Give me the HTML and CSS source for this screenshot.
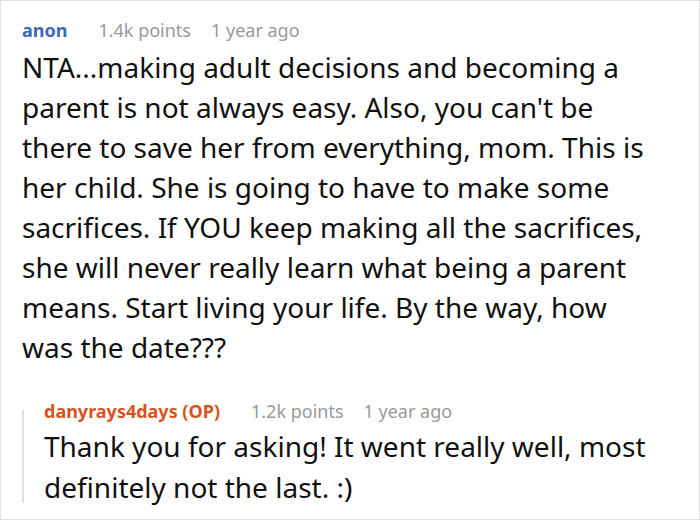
FILE: index.html
```html
<!DOCTYPE html>
<html>
<head>
<meta charset="utf-8">
<link rel="stylesheet" href="styles.css">
</head>
<body>
<div class="frame">
  <div class="comment">
    <div class="meta">
      <span class="user">anon</span>
      <span class="info">1.4k points</span>
      <span class="info">1 year ago</span>
    </div>
    <p class="body">NTA...making adult decisions and becoming a parent is not always easy. Also, you can't be there to save her from everything, mom. This is her child. She is going to have to make some sacrifices. If YOU keep making all the sacrifices, she will never really learn what being a parent means. Start living your life. By the way, how was the date???</p>
  </div>
  <div class="reply">
    <div class="bar"></div>
    <div class="reply-inner">
      <div class="meta">
        <span class="user op">danyrays4days (OP)</span>
        <span class="info">1.2k points</span>
        <span class="info">1 year ago</span>
      </div>
      <p class="body reply-body">Thank you for asking! It went really well, most definitely not the last. :)</p>
    </div>
  </div>
</div>
</body>
</html>
```
FILE: styles.css
```css
html, body {
  margin: 0;
  padding: 0;
  background: #fff;
}
.frame {
  width: 700px;
  height: 520px;
  box-sizing: border-box;
  border: 1px solid #e2e2e2;
  background: #fff;
  font-family: "Noto Sans", "Open Sans", sans-serif;
  color: #111;
  padding: 17px 39px 0 21px;
  overflow: hidden;
}
.meta {
  display: flex;
  align-items: baseline;
  font-size: 18px;
  line-height: 24px;
}
.user {
  font-weight: 700;
  color: #3a6ab7;
  margin-right: 31px;
}
.info {
  color: #999;
  margin-right: 20px;
}
.body {
  margin: 5px 0 0 0;
  font-size: 28px;
  line-height: 40px;
}
.reply {
  display: flex;
  margin-top: 32px;
}
.bar {
  width: 2px;
  background: #e0e0e0;
  margin: 11px 20px 5px 0;
  flex: none;
}
.reply-inner {
  flex: 1;
}
.reply-body {
  margin-top: 3px;
  line-height: 41px;
}
.reply .user.op {
  color: #d9531e;
}
```
